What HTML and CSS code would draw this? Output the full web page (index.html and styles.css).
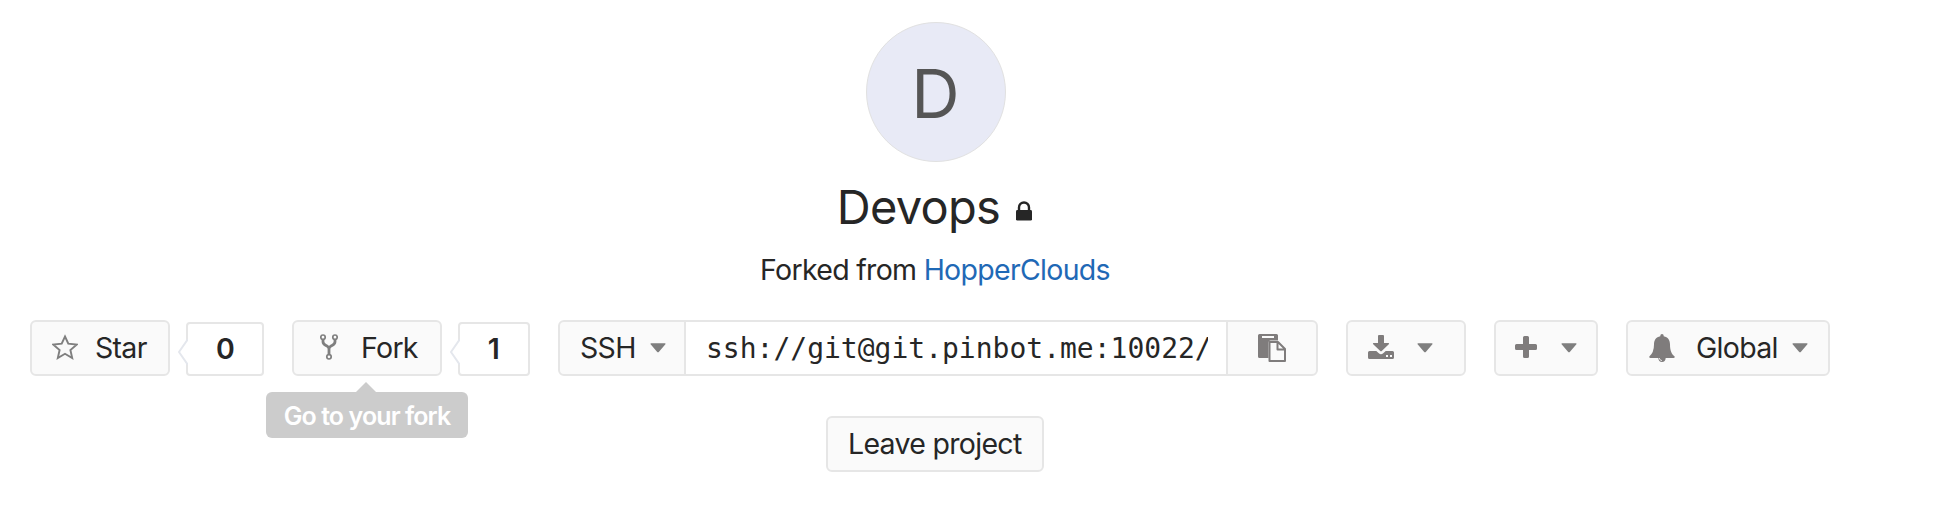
FILE: index.html
```html
<!DOCTYPE html>
<html lang="en">
<head>
<meta charset="utf-8">
<title>Devops</title>
<link rel="stylesheet" href="styles.css">
</head>
<body>
<main class="project">
  <header class="project-head">
    <div class="avatar"><span class="avatar-letter">D</span></div>
    <h1 class="project-title"><span class="title-text">Devops</span>
      <svg class="lock" width="16" height="20" viewBox="0 0 16 20"><path d="M3 9V6.500a5 5 0 0 1 10 0V9" fill="none" stroke="#262626" stroke-width="2.400"/><rect y="9" width="16" height="10.600" rx="1.400" fill="#262626"/></svg>
    </h1>
    <p class="forked"><span class="forked-text">Forked from <a class="link" href="#">HopperClouds</a></span></p>
  </header>
  <div class="controls">
    <div class="btn star">
      <svg class="icon" width="26" height="26" viewBox="0 0 26 26"><path d="M13 2.500l3.300 7.200 8.300.9-6.200 5.400 1.800 8-7.200-4.200L5.800 24l1.800-8-6.200-5.400 8.300-.9z" fill="none" stroke="#7f7f7f" stroke-width="1.900"/></svg>
      <span class="label">Star</span>
    </div>
    <div class="count star-count"><svg class="notch" width="10" height="26" viewBox="0 0 10 26"><path d="M10 0L1 13l9 13" fill="#fff" stroke="#e4e7ed" stroke-width="2"/></svg><span class="num">0</span></div>
    <div class="btn fork">
      <svg class="icon" width="18" height="26" viewBox="0 0 18 26"><g fill="none" stroke="#7f7f7f"><path d="M3 5.500v2.300c0 2.800 2.200 3.200 4 4.200q2 1 2 3v5.200M15 5.500v2.300c0 2.800-2.200 3.200-4 4.200q-2 1-2 3" stroke-width="2.800"/><g fill="#fafafa" stroke-width="1.700"><circle cx="3" cy="3.200" r="2.200"/><circle cx="15" cy="3.200" r="2.200"/><circle cx="9" cy="22.800" r="2.200"/></g></g></svg>
      <span class="label">Fork</span>
      <div class="tooltip"><span class="tip-text">Go to your fork</span></div>
    </div>
    <div class="count fork-count"><svg class="notch" width="10" height="26" viewBox="0 0 10 26"><path d="M10 0L1 13l9 13" fill="#fff" stroke="#e4e7ed" stroke-width="2"/></svg><span class="num">1</span></div>
    <div class="clone">
      <div class="clone-kind"><span class="label">SSH</span><svg class="caret" width="16" height="10" viewBox="0 0 16 10"><path d="M1.200.3h13.600q1.400 0 .6 1L9 8.800q-1 1-2 0L.6 1.300q-.8-1 .6-1z" fill="#7f7f7f"/></svg></div>
      <div class="clone-url"><span class="url">ssh://git@git.pinbot.me:10022/</span></div>
      <div class="clone-copy">
        <svg width="28" height="28" viewBox="0 0 28 28"><path d="M1.500 0h17q1.500 0 1.500 1.500V6.500h-7.500q-2 0-2 2V24h-9Q0 24 0 22.500v-21Q0 0 1.500 0z" fill="#7f7c7c"/><path d="M4 2h12v2H4z" fill="#fafafa"/><path d="M11.500 8h8.500l7 7v12H11.500zM19.500 8v7.500H27" fill="#fafafa" stroke="#7f7c7c" stroke-width="2" stroke-linejoin="round"/></svg>
      </div>
    </div>
    <div class="btn download">
      <svg class="icon" width="26" height="24" viewBox="0 0 26 24"><path d="M11 0h4q1 0 1 1v7h4.300q1.400 0 .5 1.200l-6.800 6.500q-1 1-2 0L5.200 9.200Q4.300 8 5.700 8H10V1q0-1 1-1z" fill="#7f7c7c"/><path d="M1.500 16h6.800l2.500 2.300q2.200 1.800 4.400 0L17.700 16h6.800q1.500 0 1.500 1.500v5q0 1.500-1.500 1.500h-23Q0 24 0 22.500v-5Q0 16 1.500 16z" fill="#7f7c7c"/><path d="M18 20h2v2h-2zM22 20h2v2h-2z" fill="#fafafa"/></svg>
      <svg class="caret" width="16" height="10" viewBox="0 0 16 10"><path d="M1.200.3h13.600q1.400 0 .6 1L9 8.800q-1 1-2 0L.6 1.300q-.8-1 .6-1z" fill="#7f7f7f"/></svg>
    </div>
    <div class="btn plus">
      <svg class="icon" width="22" height="22" viewBox="0 0 22 22"><path d="M9.500 0h3q1.500 0 1.500 1.500V8h6.500q1.500 0 1.500 1.500v3q0 1.500-1.500 1.500H14v6.500q0 1.500-1.500 1.500h-3Q8 22 8 20.500V14H1.500Q0 14 0 12.500v-3Q0 8 1.500 8H8V1.500Q8 0 9.500 0z" fill="#7f7c7c"/></svg>
      <svg class="caret" width="16" height="10" viewBox="0 0 16 10"><path d="M1.200.3h13.600q1.400 0 .6 1L9 8.800q-1 1-2 0L.6 1.300q-.8-1 .6-1z" fill="#7f7f7f"/></svg>
    </div>
    <div class="btn global">
      <svg class="icon" width="26" height="28" viewBox="0 0 26 28"><path d="M13 0q1.700 0 1.700 1.800v.4C19 3 21 6.300 21 10.500c0 6 1.500 9.500 4.700 12q.2 1.500-1.200 1.500H16.700q-.3 4-3.700 4t-3.700-4H1.500Q.1 24 .3 22.500 5 18.500 5 10.500C5 6.300 7 3 11.300 2.200v-.4Q11.300 0 13 0z" fill="#7f7c7c"/><path d="M10.300 24q.3 2.600 2.700 2.600" fill="none" stroke="#fafafa" stroke-width=".8"/></svg>
      <span class="label">Global</span>
      <svg class="caret" width="16" height="10" viewBox="0 0 16 10"><path d="M1.200.3h13.600q1.400 0 .6 1L9 8.800q-1 1-2 0L.6 1.300q-.8-1 .6-1z" fill="#7f7f7f"/></svg>
    </div>
  </div>
  <div class="leave-row"><div class="btn leave"><span class="label">Leave project</span></div></div>
</main>
</body>
</html>
```
FILE: styles.css
```css
* { box-sizing: border-box; }
body { margin: 0; background: #fff; color: #262626; font-family: Inter, "Liberation Sans", sans-serif; font-size: 28.5px; letter-spacing: -0.7px; }
.project { width: 1950px; height: 518px; padding-top: 22px; overflow: hidden; }
.project-head { width: 1872px; display: flex; flex-direction: column; align-items: center; height: 298px; }
.avatar { width: 140px; height: 140px; padding: 2px 2px 0 0; border-radius: 50%; border: 1.5px solid #e1e1e1; background: #e8eaf6; display: flex; align-items: center; justify-content: center; color: #555; font-size: 67px; line-height: 1; }
.project-title { margin: 18px 0 0; padding-right: 3px; height: 54px; display: flex; align-items: center; gap: 16px; font-size: 47px; font-weight: 400; line-height: 54px; letter-spacing: -0.7px; }
.lock { margin-top: 8px; }
.forked { margin: 18px 0 0; padding-right: 2px; line-height: 36px; white-space: nowrap; }
.link { color: #1f69b6; text-decoration: none; }
.controls { display: flex; height: 56px; padding-left: 30px; }
.btn { position: relative; display: flex; align-items: center; height: 56px; border: 2px solid #e6e6e6; border-radius: 6px; background: #fafafa; padding-left: 20px; white-space: nowrap; }
.label { line-height: 34px; padding-bottom: 1px; }
.icon { margin-bottom: 2px; }
.star { width: 140px; }
.star .label { margin-left: 17px; }
.count { position: relative; display: flex; align-items: center; justify-content: center; height: 54px; margin: 2px 28px 0 16px; padding-bottom: 2px; border: 2px solid #e6e6e6; border-radius: 4px; font-weight: 600; }
.notch { position: absolute; left: -10px; top: 15px; }
.star-count { width: 78px; }
.fork { width: 150px; padding-left: 26px; }
.fork .label { margin-left: 23px; }
.fork-count { width: 72px; padding-right: 1px; }
.tooltip { position: absolute; left: -28px; top: 70px; width: 202px; height: 46px; border-radius: 6px; background: #ccc; color: #fff; font-size: 25px; font-weight: 600; letter-spacing: -0.9px; display: flex; align-items: center; justify-content: center; padding-top: 1px; }
.tooltip::before { content: ""; position: absolute; left: 90px; top: -10px; border: 10px solid transparent; border-top: 0; border-bottom-color: #ccc; }
.clone { display: flex; width: 760px; border: 2px solid #e6e6e6; border-radius: 6px; background: #fafafa; margin-right: 28px; }
.clone-kind { width: 126px; display: flex; align-items: center; padding-left: 20px; border-right: 2px solid #e6e6e6; }
.clone-kind .caret { margin-left: 14px; }
.clone-url { width: 542px; display: flex; align-items: center; background: #fff; padding: 0 18px 0 20px; border-right: 2px solid #e6e6e6; font-family: "DejaVu Sans Mono", monospace; font-size: 28px; letter-spacing: 0; white-space: nowrap; }
.url { width: 502px; overflow: hidden; }
.clone-copy { flex: 1; display: flex; align-items: center; padding-left: 30px; }
.download { width: 120px; margin-right: 28px; }
.download .caret { margin-left: 23px; }
.plus { width: 104px; margin-right: 28px; padding-left: 19px; }
.plus .caret { margin-left: 24px; }
.global { width: 204px; padding-left: 21px; }
.global .icon { margin-bottom: 0; }
.global .label { margin-left: 21px; }
.global .caret { margin-left: 14px; }
.leave-row { padding: 40px 0 0 826px; }
.leave { width: 218px; padding-left: 20px; }
```
